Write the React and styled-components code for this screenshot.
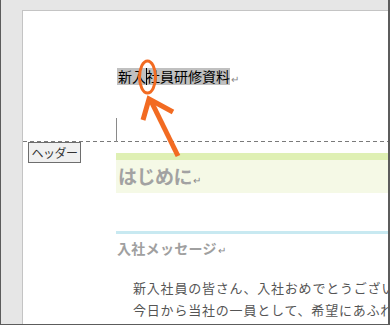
import React from "react";
import styled, { createGlobalStyle } from "styled-components";

const Global = createGlobalStyle`
  html, body { margin: 0; padding: 0; background: #ffffff; }
  body { font-family: "Noto Sans CJK JP", "Noto Sans", sans-serif; }
`;

const Window = styled.div`
  position: relative;
  width: 390px;
  height: 325px;
  box-sizing: border-box;
  background: #e6e6e6;
  border-left: 1px solid #5c5c5c;
  border-right: 2px solid #5c5c5c;
  border-bottom: 1px solid #5c5c5c;
  overflow: hidden;
  padding: 10px 0 0 21px;
`;

const Page = styled.div`
  position: relative;
  background: #ffffff;
  border-top: 1px solid #c4c4c4;
  border-left: 1px solid #c4c4c4;
  height: 330px;
`;

const HeaderArea = styled.div`
  position: relative;
  height: 131px;
  box-sizing: border-box;
  padding: 57px 0 0 94px;
  display: flex;
  flex-direction: column;
  background-image: repeating-linear-gradient(to right, #7a7a7a 0 4px, transparent 4px 7px);
  background-size: 100% 1px;
  background-position: left bottom;
  background-repeat: no-repeat;
`;

const TitleLine = styled.div`
  display: flex;
  align-items: center;
  font-size: 14px;
  line-height: 17px;
  color: #000;
`;

const Selected = styled.span`
  position: relative;
  background: #c0c0c0;
  padding-left: 1px;
`;

const Caret = styled.span`
  position: absolute;
  left: 29px;
  top: 0;
  width: 1px;
  height: 17px;
  background: #000;
`;

const ReturnMark = styled.span`
  font-size: 10px;
  color: #888;
  margin-left: 1px;
  line-height: 17px;
  transform: translateY(2px);
`;

const MarginMarker = styled.div`
  margin-top: auto;
  margin-left: -1px;
  width: 1px;
  height: 24px;
  background: #8a8a8a;
`;

const HeaderTab = styled.div`
  position: absolute;
  left: 5px;
  top: 131px;
  width: 53px;
  height: 21px;
  box-sizing: border-box;
  border: 1px solid #6e6e6e;
  background: #f0f0f0;
  font-size: 12px;
  color: #333;
  display: flex;
  align-items: center;
  justify-content: center;
  padding-bottom: 1px;
  letter-spacing: -0.5px;
`;

const Body = styled.div`
  padding: 11px 0 0 93px;
`;

const IntroBlock = styled.div`
  border-top: 7px solid #dff0b4;
  background: #f5f9e6;
  height: 40px;
  box-sizing: border-box;
  display: flex;
  align-items: center;
  padding-left: 2px;
  padding-bottom: 2px;
`;

const IntroHeading = styled.span`
  font-size: 19px;
  font-weight: bold;
  color: #a2a2a2;
  letter-spacing: -0.5px;
`;

const SmallReturn = styled.span`
  font-size: 10px;
  color: #888;
  font-weight: normal;
  margin-left: 1px;
`;

const Section = styled.div`
  margin-top: 38px;
  border-top: 3px solid #c8e9f1;
`;

const SectionHeading = styled.div`
  font-size: 14px;
  font-weight: bold;
  color: #a0a0a0;
  line-height: 20px;
  margin-top: 4px;
  padding-left: 1px;
  letter-spacing: 0.3px;
`;

const Paragraph = styled.div`
  margin-top: 17px;
  padding-left: 17px;
  font-size: 13px;
  line-height: 22px;
  color: #555;
  letter-spacing: 0.8px;
  white-space: nowrap;
`;

const Annotation = styled.svg`
  position: absolute;
  left: 0;
  top: 0;
  pointer-events: none;
`;

export default function App() {
  return (
    <>
      <Global />
      <Window>
        <Page>
          <HeaderArea>
            <TitleLine>
              <Selected>
                新入社員研修資料
                <Caret />
              </Selected>
              <ReturnMark>↵</ReturnMark>
            </TitleLine>
            <MarginMarker />
          </HeaderArea>
          <HeaderTab>ヘッダー</HeaderTab>
          <Body>
            <IntroBlock>
              <IntroHeading>
                はじめに<SmallReturn>↵</SmallReturn>
              </IntroHeading>
            </IntroBlock>
            <Section>
              <SectionHeading>
                入社メッセージ<SmallReturn>↵</SmallReturn>
              </SectionHeading>
              <Paragraph>
                新入社員の皆さん、入社おめでとうございます。
                <br />
                今日から当社の一員として、希望にあふれ
              </Paragraph>
            </Section>
          </Body>
        </Page>
        <Annotation width="390" height="325" viewBox="0 0 390 325">
          <ellipse cx="146.5" cy="77" rx="8" ry="16" fill="none" stroke="#f26b22" strokeWidth="3" />
          <line x1="177" y1="156" x2="150" y2="101" stroke="#f26b22" strokeWidth="5" />
          <polyline points="142,120 148,99 172,112" fill="none" stroke="#f26b22" strokeWidth="5" strokeLinejoin="miter" />
        </Annotation>
      </Window>
    </>
  );
}
